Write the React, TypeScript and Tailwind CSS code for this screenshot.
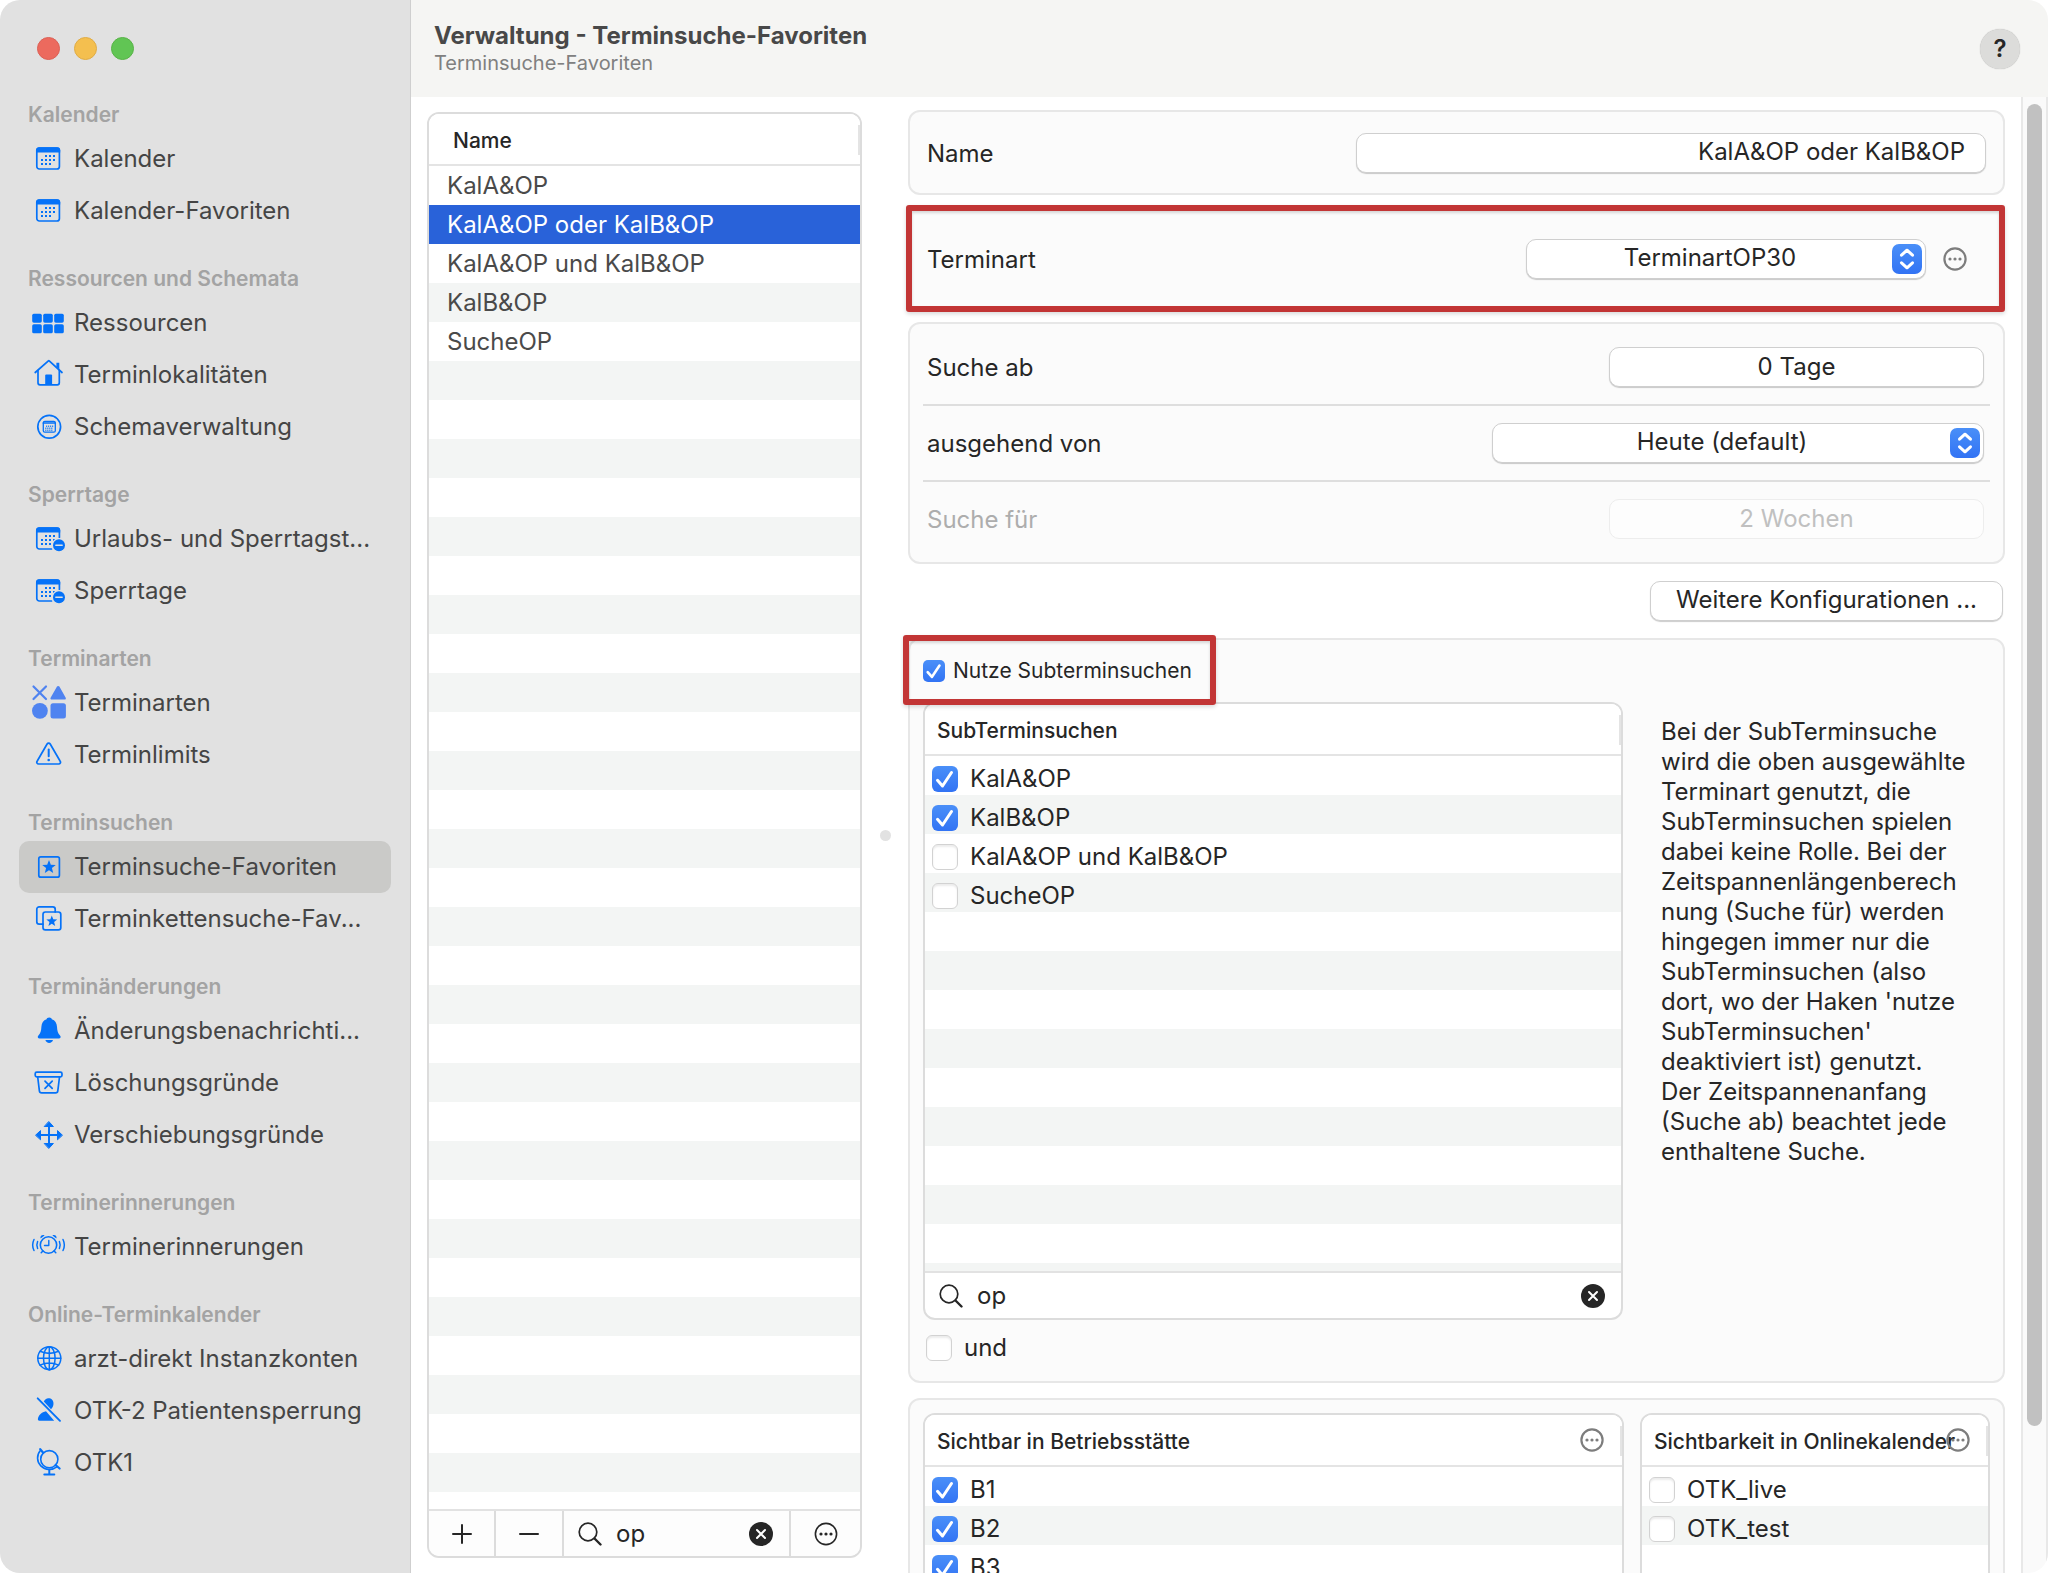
import { useId, useState, type ReactNode } from "react";
import clsx from "clsx";

type IconName =
  | "calendar"
  | "calendar-minus"
  | "grid"
  | "house"
  | "schema"
  | "shapes"
  | "warning"
  | "star"
  | "star-stack"
  | "bell"
  | "bin"
  | "move"
  | "alarm"
  | "globe"
  | "person-slash"
  | "desk-globe";

const SECTIONS: { title: string; items: { label: string; icon: IconName }[] }[] = [
  {
    title: "Kalender",
    items: [
      { label: "Kalender", icon: "calendar" },
      { label: "Kalender-Favoriten", icon: "calendar" },
    ],
  },
  {
    title: "Ressourcen und Schemata",
    items: [
      { label: "Ressourcen", icon: "grid" },
      { label: "Terminlokalitäten", icon: "house" },
      { label: "Schemaverwaltung", icon: "schema" },
    ],
  },
  {
    title: "Sperrtage",
    items: [
      { label: "Urlaubs- und Sperrtagst...", icon: "calendar-minus" },
      { label: "Sperrtage", icon: "calendar-minus" },
    ],
  },
  {
    title: "Terminarten",
    items: [
      { label: "Terminarten", icon: "shapes" },
      { label: "Terminlimits", icon: "warning" },
    ],
  },
  {
    title: "Terminsuchen",
    items: [
      { label: "Terminsuche-Favoriten", icon: "star" },
      { label: "Terminkettensuche-Fav...", icon: "star-stack" },
    ],
  },
  {
    title: "Terminänderungen",
    items: [
      { label: "Änderungsbenachrichti...", icon: "bell" },
      { label: "Löschungsgründe", icon: "bin" },
      { label: "Verschiebungsgründe", icon: "move" },
    ],
  },
  {
    title: "Terminerinnerungen",
    items: [{ label: "Terminerinnerungen", icon: "alarm" }],
  },
  {
    title: "Online-Terminkalender",
    items: [
      { label: "arzt-direkt Instanzkonten", icon: "globe" },
      { label: "OTK-2 Patientensperrung", icon: "person-slash" },
      { label: "OTK1", icon: "desk-globe" },
    ],
  },
];

const FAVORITES = ["KalA&OP", "KalA&OP oder KalB&OP", "KalA&OP und KalB&OP", "KalB&OP", "SucheOP"];

const STAR = "M0-7 1.8-2.3 6.8-2 2.9 1.1 4.2 6 0 3.2-4.2 6-2.9 1.1-6.8-2-1.8-2.3Z";

const CALENDAR_DOTS = [
  [14, 14], [18, 14], [22, 14],
  [10, 18], [14, 18], [18, 18], [22, 18],
  [10, 22], [14, 22], [18, 22],
];

function CalendarDots() {
  return (
    <g fill="currentColor" stroke="none">
      {CALENDAR_DOTS.map(([x, y]) => (
        <rect key={`${x}-${y}`} x={x - 1} y={y - 1} width="2" height="2" />
      ))}
    </g>
  );
}

const ICONS: Record<IconName, ReactNode> = {
  calendar: (
    <>
      <rect x="4.8" y="6" width="22.6" height="21" rx="2.5" />
      <path d="M4 10.5V8.2A3 3 0 0 1 7 5.2h18.2a3 3 0 0 1 3 3v2.3Z" fill="currentColor" stroke="none" />
      <CalendarDots />
    </>
  ),
  "calendar-minus": (
    <>
      <path d="M19.5 27H7.3a2.5 2.5 0 0 1-2.5-2.5V8.5A2.5 2.5 0 0 1 7.3 6h17.6a2.5 2.5 0 0 1 2.5 2.5v7" />
      <path d="M4 10.5V8.2A3 3 0 0 1 7 5.2h18.2a3 3 0 0 1 3 3v2.3Z" fill="currentColor" stroke="none" />
      <CalendarDots />
      <circle cx="27" cy="23.2" r="7.2" fill="#e1e1e1" stroke="none" />
      <circle cx="27" cy="23.2" r="6" fill="currentColor" stroke="none" />
      <path d="M23.8 23.2h6.4" stroke="#e1e1e1" strokeWidth="1.4" />
    </>
  ),
  grid: (
    <g fill="currentColor" stroke="none">
      {[0, 11, 22].map((x) => (
        <g key={x}>
          <rect x={x + 0.2} y="7.7" width="9.6" height="9" rx="1.6" />
          <rect x={x + 0.2} y="18.3" width="9.6" height="9" rx="1.6" />
        </g>
      ))}
    </g>
  ),
  house: (
    <>
      <path d="M3.2 14.5 16.4 2.8a.6.6 0 0 1 .8 0L30 14.5" />
      <path d="M6 12.5v12.3a2 2 0 0 0 2 2h17.3a2 2 0 0 0 2-2V12.5" />
      <path d="M24.4 4.8h2.9v6.7l-2.9-2.6Z" fill="currentColor" stroke="none" />
      <path d="M13.2 26.5v-9a1 1 0 0 1 1-1h4.9a1 1 0 0 1 1 1v9Z" fill="currentColor" stroke="none" />
    </>
  ),
  schema: (
    <>
      <circle cx="17.2" cy="16.8" r="11.4" />
      <rect x="11.3" y="11.4" width="12" height="10.8" rx="1.5" strokeWidth="1.3" />
      <path d="M11.3 13h12" strokeWidth="1.6" />
      <g fill="currentColor" stroke="none">
        {[14, 16, 18, 20].map((x) => (
          <g key={x}>
            <rect x={x} y="15.6" width="1.2" height="1.2" />
            <rect x={x - 0.8} y="17.6" width="1.2" height="1.2" />
            <rect x={x - 0.8} y="19.6" width="1.2" height="1.2" />
          </g>
        ))}
      </g>
    </>
  ),
  shapes: (
    <g className="text-[#4f83f0]">
      <path d="m1.5.5 12.5 12.5M14 .5 1.5 13" strokeWidth="2.2" />
      <path d="M25 .6a1.4 1.4 0 0 1 2.4 0l6.3 11.2a1.2 1.2 0 0 1-1 1.8H19.6a1.2 1.2 0 0 1-1-1.8Z" fill="currentColor" stroke="none" />
      <circle cx="7.9" cy="24.8" r="7.9" fill="currentColor" stroke="none" />
      <rect x="18.5" y="17.2" width="15.4" height="15.2" rx="2.5" fill="currentColor" stroke="none" />
    </g>
  ),
  warning: (
    <>
      <path d="M15.1 6a1.8 1.8 0 0 1 3.1 0l10 17.2a1.8 1.8 0 0 1-1.6 2.8H6.7a1.8 1.8 0 0 1-1.6-2.8Z" />
      <path d="M16.7 11.5v6.8" strokeWidth="2" />
      <circle cx="16.7" cy="22" r="1.3" fill="currentColor" stroke="none" />
    </>
  ),
  star: (
    <>
      <rect x="6.8" y="6.8" width="20.6" height="20.4" rx="2" />
      <path d={STAR} transform="translate(17 17)" fill="currentColor" stroke="none" />
    </>
  ),
  "star-stack": (
    <>
      <path d="M11 22.2H7.2a2.4 2.4 0 0 1-2.4-2.4V7.2a2.4 2.4 0 0 1 2.4-2.4h13.6a2.4 2.4 0 0 1 2.4 2.4V10" />
      <rect x="11" y="10" width="17.8" height="17.8" rx="2.4" />
      <path d={STAR} transform="translate(19.8 19.2) scale(.8)" fill="currentColor" stroke="none" />
    </>
  ),
  bell: (
    <g fill="currentColor" stroke="none">
      <path d="M17.2 3.6c1.6 0 2.4.9 2.6 1.7 3.3 1 5 3.9 5.2 7.5.2 4.2.8 6.4 3 8.8 1.3 1.4.6 3-1.2 3H7.6c-1.8 0-2.5-1.6-1.2-3 2.2-2.4 2.8-4.6 3-8.8.2-3.6 1.9-6.5 5.2-7.5.2-.8 1-1.7 2.6-1.7Z" />
      <path d="M13.4 26h7.6c-.4 1.8-2 2.9-3.8 2.9S13.8 27.8 13.4 26Z" />
    </g>
  ),
  bin: (
    <>
      <rect x="3.2" y="6.2" width="26.8" height="4.6" rx="1.5" />
      <path d="m5.7 11 1.7 13.8a2.2 2.2 0 0 0 2.2 2h14a2.2 2.2 0 0 0 2.2-2L27.5 11" />
      <path d="m13 15.2 7.2 7.2M20.2 15.2 13 22.4" />
    </>
  ),
  move: (
    <>
      <path d="M17 7v20M7 17h20" strokeWidth="2" />
      <g fill="currentColor" strokeWidth="1">
        <path d="m17 3.8 4.4 4.7h-8.8Z" />
        <path d="m17 30.2 4.4-4.7h-8.8Z" />
        <path d="m3.8 17 4.7-4.4v8.8Z" />
        <path d="m30.2 17-4.7-4.4v8.8Z" />
      </g>
    </>
  ),
  alarm: (
    <>
      <circle cx="16.5" cy="15" r="8.2" strokeWidth="1.6" />
      <path d="M16.8 10.5v5h-4.3" strokeWidth="1.4" />
      <path d="m9.2 22.8 1.7-1.9M23.8 22.8l-1.7-1.9" strokeWidth="1.5" />
      <path d="M8.6 8.6c-.9-2.2 1.5-4.4 4-3.2ZM24.400 8.600c.9-2.200-1.500-4.400-4-3.200Z" fill="currentColor" stroke="none" />
      <path d="M5.6 11.5c-1 2.3-1 4.7 0 7M27.4 11.5c1 2.3 1 4.7 0 7M2 9.5c-1.8 3.7-1.8 7.3 0 11M31 9.5c1.8 3.7 1.8 7.3 0 11" strokeWidth="1.5" />
    </>
  ),
  globe: (
    <g strokeWidth="1.5">
      <circle cx="17.3" cy="16.2" r="11.5" />
      <ellipse cx="17.3" cy="16.2" rx="5.8" ry="11.5" />
      <path d="M17.3 4.7v23M5.8 16.2h23M8 9.3c5.6 2.5 13 2.5 18.6 0M8 23.1c5.6-2.5 13-2.5 18.6 0" />
    </g>
  ),
  "person-slash": (
    <>
      <path d="M11.8 7.5c1-2.4 3.2-3.7 5.6-3.2 3 .6 4.6 3.3 4 6.5-.3 1.9-1.2 3.5-2.4 4.4Z" fill="currentColor" stroke="none" />
      <path d="M14 17.2c-4.3.9-7.5 4-8.1 7.6-.2 1.2.4 1.9 1.5 1.9h14.8Z" fill="currentColor" stroke="none" />
      <path d="m5.7 4.3 22.3 22.5" strokeWidth="1.9" />
    </>
  ),
  "desk-globe": (
    <g strokeWidth="1.6">
      <circle cx="17.3" cy="13.2" r="8.6" />
      <path d="M8.2 4.8c-3.6 4-3.6 11 .6 15 4.6 4.4 11.4 4.7 16 1" />
      <path d="m8.2 3.2 3 3.6M23.6 19l4 3.5" strokeWidth="2.2" />
      <path d="M17.3 24v4M12.3 28.6h10" strokeWidth="2" />
    </g>
  ),
};

function SidebarIcon({ name }: { name: IconName }) {
  return (
    <svg
      viewBox="0 0 34 34"
      className="h-[34px] w-[34px] shrink-0 overflow-visible text-[#0572f8]"
      fill="none"
      stroke="currentColor"
      strokeWidth="1.7"
      strokeLinecap="round"
      strokeLinejoin="round"
      aria-hidden="true"
    >
      {ICONS[name]}
    </svg>
  );
}

function EllipsisCircle({ thin }: { thin?: boolean }) {
  return (
    <svg viewBox="0 0 24 24" className="h-6 w-6" fill="none" stroke="currentColor" strokeWidth={thin ? 1.6 : 2.2} aria-hidden="true">
      <circle cx="12" cy="12" r="10.6" />
      <g fill="currentColor" stroke="none">
        <circle cx="7" cy="12" r="1.6" />
        <circle cx="12" cy="12" r="1.6" />
        <circle cx="17" cy="12" r="1.6" />
      </g>
    </svg>
  );
}

function Checkbox({ label, defaultChecked, small }: { label: string; defaultChecked?: boolean; small?: boolean }) {
  return (
    <label className={clsx("flex items-center leading-8", small ? "gap-2 text-[21px]" : "gap-3 text-[24px]")}>
      <span className="grid shrink-0">
        <input
          type="checkbox"
          defaultChecked={defaultChecked}
          className={clsx(
            "peer col-start-1 row-start-1 appearance-none border border-[#d2d2d2] bg-white shadow-[inset_0_2px_2px_rgba(0,0,0,0.08)] checked:border-0 checked:bg-linear-to-b checked:from-[#4a8ff8] checked:to-[#3273f4] checked:shadow-none",
            small ? "h-[22px] w-[22px] rounded-[5px]" : "h-[26px] w-[26px] rounded-md",
          )}
        />
        <svg
          viewBox="0 0 26 26"
          className={clsx(
            "pointer-events-none invisible col-start-1 row-start-1 peer-checked:visible",
            small ? "h-[22px] w-[22px]" : "h-[26px] w-[26px]",
          )}
          fill="none"
          stroke="white"
          strokeWidth="3"
          strokeLinecap="round"
          strokeLinejoin="round"
          aria-hidden="true"
        >
          <path d="m5.5 14.300 5 5.700L19.500 6.500" />
        </svg>
      </span>
      {label}
    </label>
  );
}

function SearchField({ label }: { label: string }) {
  const [query, setQuery] = useState("op");
  return (
    <div className="flex h-full flex-1 items-center pr-4 pl-3.5">
      <svg viewBox="0 0 24 24" className="h-6 w-6 shrink-0" fill="none" stroke="currentColor" strokeLinecap="round" aria-hidden="true">
        <circle cx="10" cy="10" r="8.8" strokeWidth="1.7" />
        <path d="m16.5 16.5 6 6" strokeWidth="2.4" />
      </svg>
      <input
        type="text"
        aria-label={label}
        value={query}
        onChange={(e) => setQuery(e.target.value)}
        className="ml-3.5 h-8 w-0 min-w-0 flex-1 bg-transparent text-[24px] outline-none"
      />
      <button type="button" aria-label="Suche leeren" onClick={() => setQuery("")}>
        <svg viewBox="0 0 24 24" className="h-6 w-6" aria-hidden="true">
          <circle cx="12" cy="12" r="12" fill="#262626" />
          <path d="m8 8 8 8M16 8l-8 8" stroke="white" strokeWidth="2" strokeLinecap="round" />
        </svg>
      </button>
    </div>
  );
}

function PopUp({ id, options, className }: { id: string; options: string[]; className: string }) {
  return (
    <div className={clsx("relative h-10", className)}>
      <select
        id={id}
        className="h-full w-full appearance-none rounded-[10px] border border-[#cfcfcf] bg-white pr-8 pb-0.5 [text-align-last:center] text-[24px] shadow-[0_1px_1px_rgba(0,0,0,0.2)] outline-none"
      >
        {options.map((option) => (
          <option key={option}>{option}</option>
        ))}
      </select>
      <span className="pointer-events-none absolute top-[5px] right-1 grid h-[30px] w-[30px] place-items-center rounded-[7px] bg-linear-to-b from-[#4a8ff8] to-[#3273f4]">
        <svg viewBox="0 0 30 30" className="h-[30px] w-[30px]" fill="none" stroke="white" strokeWidth="3" strokeLinecap="round" strokeLinejoin="round" aria-hidden="true">
          <path d="m9.5 11.2 5.5-5 5.500 5M9.500 18.800l5.500 5 5.500-5" />
        </svg>
      </span>
    </div>
  );
}

const STRIPES =
  "bg-[linear-gradient(to_bottom,#ffffff_39px,#f3f5f4_39px)] bg-[length:100%_78px] bg-[position:0_52px]";

function ListTable({
  title,
  headClass,
  rows,
  action,
}: {
  title: string;
  headClass: string;
  rows: { key: string; cell: ReactNode; className?: string }[];
  action?: ReactNode;
}) {
  return (
    <div className={clsx("min-h-0 flex-1 overflow-hidden", STRIPES)}>
      <table className="w-full border-separate border-spacing-0">
        <thead>
          <tr>
            <th
              scope="col"
              className={clsx(
                "relative h-[52px] border-b-2 border-[#e4e4e4] bg-white pt-1 pr-0 pb-0 text-left text-[21px] leading-8 font-medium whitespace-nowrap",
                headClass,
              )}
            >
              {title}
              {action}
              <span className="absolute top-[11px] right-0 h-[30px] w-0.5 bg-[#e4e4e4]" />
            </th>
          </tr>
        </thead>
        <tbody>
          {rows.map((row) => (
            <tr key={row.key}>
              <td className={clsx("h-[39px] pr-0 pb-0", row.className)}>{row.cell}</td>
            </tr>
          ))}
        </tbody>
      </table>
    </div>
  );
}

const FRAME = "flex flex-col overflow-hidden rounded-xl border-2 border-[#dcdcdc] bg-white";
const GROUP = "rounded-xl border-2 border-[#e7e7e7] bg-[#fbfbfb]";
const FIELD =
  "h-10 rounded-[10px] border border-[#cfcfcf] bg-white pb-0.5 text-[24px] shadow-[0_1px_1px_rgba(0,0,0,0.2)] outline-none";
const MARK =
  "rounded-[3px] border-6 border-[#c23535] shadow-[0_2px_4px_rgba(0,0,0,0.15),inset_0_2px_3px_rgba(0,0,0,0.15)]";

function checkRows(items: [string, boolean][]) {
  return items.map(([label, checked]) => ({
    key: label,
    className: "pt-1.5 pl-[7px]",
    cell: <Checkbox label={label} defaultChecked={checked} />,
  }));
}

function Sidebar() {
  return (
    <aside className="flex w-[411px] shrink-0 flex-col border-r border-[#cfcfcf] bg-[#e1e1e1]">
      <div className="flex h-[97px] items-center gap-3.5 pl-[37px]">
        <button type="button" aria-label="Schließen" className="h-[23px] w-[23px] rounded-full border border-[#dc6055] bg-[#ec6a5e]" />
        <button type="button" aria-label="Minimieren" className="h-[23px] w-[23px] rounded-full border border-[#e0ac45] bg-[#f4bf4f]" />
        <button type="button" aria-label="Maximieren" className="h-[23px] w-[23px] rounded-full border border-[#58b347] bg-[#61c554]" />
      </div>
      <nav>
        {SECTIONS.map((section) => (
          <section key={section.title} className="mb-6">
            <h2 className="h-9 pl-7 text-[21px] leading-9 font-semibold text-[#a3a3a3]">{section.title}</h2>
            <ul className="px-[19px]">
              {section.items.map((item) => {
                const active = item.label === "Terminsuche-Favoriten";
                return (
                  <li key={item.label}>
                    <a
                      href="#"
                      aria-current={active ? "page" : undefined}
                      className={clsx(
                        "flex h-[52px] items-center gap-2 rounded-[10px] pl-[13px] text-[24px] whitespace-nowrap text-[#454545]",
                        active && "bg-[#cacac8]",
                      )}
                    >
                      <SidebarIcon name={item.icon} />
                      {item.label}
                    </a>
                  </li>
                );
              })}
            </ul>
          </section>
        ))}
      </nav>
    </aside>
  );
}

function FavoriteList() {
  const [selected, setSelected] = useState(FAVORITES[1]);
  return (
    <div className={clsx(FRAME, "mt-[15px] mb-[15px] ml-4 w-[435px] shrink-0")}>
      <ListTable
        title="Name"
        headClass="pl-6"
        rows={FAVORITES.map((name) => ({
          key: name,
          className: clsx("px-0 pt-0", name === selected ? "bg-[#2962d9] text-white" : "text-[#4a4a4a]"),
          cell: (
            <button type="button" onClick={() => setSelected(name)} className="block h-[39px] w-full pl-[18px] text-left text-[24px]">
              {name}
            </button>
          ),
        }))}
      />
      <div className="flex h-[47px] items-center border-t-2 border-[#e2e2e2] bg-[#fdfdfd]">
        <button type="button" aria-label="Hinzufügen" className="grid h-full w-[67px] place-items-center border-r-2 border-[#dcdcdc]">
          <svg viewBox="0 0 22 22" className="h-[22px] w-[22px]" stroke="currentColor" strokeWidth="2" strokeLinecap="round" aria-hidden="true">
            <path d="M2 11h18M11 2v18" />
          </svg>
        </button>
        <button type="button" aria-label="Entfernen" className="grid h-full w-[68px] place-items-center border-r-2 border-[#dcdcdc]">
          <svg viewBox="0 0 22 22" className="h-[22px] w-[22px]" stroke="currentColor" strokeWidth="2" strokeLinecap="round" aria-hidden="true">
            <path d="M2 11h18" />
          </svg>
        </button>
        <SearchField label="Favoriten suchen" />
        <button type="button" aria-label="Weitere Aktionen" className="grid h-full w-[71px] place-items-center border-l-2 border-[#dcdcdc]">
          <EllipsisCircle thin />
        </button>
      </div>
    </div>
  );
}

function FieldRow({ id, label, disabled, children }: { id: string; label: string; disabled?: boolean; children: ReactNode }) {
  return (
    <div className="flex items-center justify-between py-[17px] pr-1.5 pl-1">
      <label htmlFor={id} className={clsx("pt-0.5", disabled && "text-[#adadad]")}>
        {label}
      </label>
      {children}
    </div>
  );
}

function HeaderMenu({ label }: { label: string }) {
  return (
    <button type="button" aria-label={label} className="absolute top-[13px] right-[18px] text-[#7d7d7d]">
      <EllipsisCircle />
    </button>
  );
}

function Detail() {
  const id = useId();
  return (
    <div className="min-w-0 flex-1 overflow-hidden pt-[13px] pr-4 pl-2 text-[24px] leading-8">
      <div className={clsx(GROUP, "flex h-[85px] items-center justify-between pr-[17px] pl-[17px]")}>
        <label htmlFor={`${id}-name`} className="pt-0.5">
          Name
        </label>
        <input id={`${id}-name`} type="text" defaultValue="KalA&OP oder KalB&OP" className={clsx(FIELD, "w-[630px] pr-5 text-right")} />
      </div>

      <div className={clsx(MARK, "mt-2.5 -ml-0.5 flex h-[107px] items-center bg-[#fbfbfb] pr-8 pl-[15px]")}>
        <label htmlFor={`${id}-type`} className="flex-1 pt-0.5">
          Terminart
        </label>
        <PopUp id={`${id}-type`} options={["TerminartOP30"]} className="w-[400px]" />
        <button type="button" aria-label="Terminart-Aktionen" className="ml-[17px] text-[#7d7d7d]">
          <EllipsisCircle />
        </button>
      </div>

      <div className={clsx(GROUP, "mt-2.5 divide-y-2 divide-[#dedede] px-[13px] py-1.5")}>
        <FieldRow id={`${id}-from`} label="Suche ab">
          <input id={`${id}-from`} type="text" defaultValue="0 Tage" className={clsx(FIELD, "w-[375px] text-center")} />
        </FieldRow>
        <FieldRow id={`${id}-base`} label="ausgehend von">
          <PopUp id={`${id}-base`} options={["Heute (default)"]} className="w-[492px]" />
        </FieldRow>
        <FieldRow id={`${id}-for`} label="Suche für" disabled>
          <input
            id={`${id}-for`}
            type="text"
            disabled
            defaultValue="2 Wochen"
            className="h-10 w-[375px] rounded-[10px] border border-[#ededed] bg-[#fdfdfd] pb-0.5 text-center text-[24px] text-[#c0c0c0]"
          />
        </FieldRow>
      </div>

      <div className="mt-[17px] flex justify-end pr-0.5">
        <button type="button" className={clsx(FIELD, "w-[353px]")}>
          Weitere Konfigurationen ...
        </button>
      </div>

      <div className={clsx(GROUP, "mt-[17px] px-[13px] pb-[17px]")}>
        <div className="relative flex h-[62px] w-fit items-center">
          <Checkbox label="Nutze Subterminsuchen" defaultChecked small />
          <span className={clsx(MARK, "pointer-events-none absolute -top-[5px] -right-6 -bottom-[3px] -left-5 z-10")} />
        </div>
        <div className="flex">
          <div className={clsx(FRAME, "h-[618px] flex-1")}>
            <ListTable
              title="SubTerminsuchen"
              headClass="pl-3"
              rows={checkRows([
                ["KalA&OP", true],
                ["KalB&OP", true],
                ["KalA&OP und KalB&OP", false],
                ["SucheOP", false],
              ])}
            />
            <div className="h-[47px] border-t-2 border-[#e2e2e2]">
              <SearchField label="SubTerminsuchen suchen" />
            </div>
          </div>
          <p className="mt-[15px] mr-[22px] ml-[38px] w-[307px] leading-[30px] break-words">
            Bei der SubTerminsuche wird die oben ausgewählte Terminart genutzt, die SubTerminsuchen spielen dabei keine
            Rolle. Bei der Zeitspannenlängenberechnung (Suche für) werden hingegen immer nur die SubTerminsuchen (also
            dort, wo der Haken 'nutze SubTerminsuchen' deaktiviert ist) genutzt. Der Zeitspannenanfang (Suche ab)
            beachtet jede enthaltene Suche.
          </p>
        </div>
        <div className="mt-3 flex pl-[3px]">
          <Checkbox label="und" />
        </div>
      </div>

      <div className={clsx(GROUP, "mt-[15px] flex gap-4 p-[13px]")}>
        <div className={clsx(FRAME, "h-[300px] flex-1")}>
          <ListTable
            title="Sichtbar in Betriebsstätte"
            headClass="pl-3"
            action={<HeaderMenu label="Betriebsstätten-Aktionen" />}
            rows={checkRows([
              ["B1", true],
              ["B2", true],
              ["B3", true],
            ])}
          />
        </div>
        <div className={clsx(FRAME, "h-[300px] w-[350px]")}>
          <ListTable
            title="Sichtbarkeit in Onlinekalender"
            headClass="pl-3"
            action={<HeaderMenu label="Onlinekalender-Aktionen" />}
            rows={checkRows([
              ["OTK_live", false],
              ["OTK_test", false],
            ])}
          />
        </div>
      </div>
    </div>
  );
}

export default function App() {
  return (
    <div className="h-screen bg-white font-['Inter','Liberation_Sans',sans-serif] text-[#262626]">
      <div className="flex h-full overflow-hidden rounded-[20px] bg-white">
        <Sidebar />
        <main className="flex min-w-0 flex-1 flex-col">
          <header className="flex h-[97px] shrink-0 items-center justify-between bg-[#f5f5f3] pr-7 pl-[23px]">
            <div>
              <h1 className="text-[24px] leading-7 font-bold text-[#484848]">Verwaltung - Terminsuche-Favoriten</h1>
              <p className="text-[20px] leading-[26px] text-[#808080]">Terminsuche-Favoriten</p>
            </div>
            <button
              type="button"
              aria-label="Hilfe"
              className="h-10 w-10 rounded-full bg-[#dcdcda] text-[24px] font-semibold shadow-[0_0_1px_rgba(0,0,0,0.3)]"
            >
              ?
            </button>
          </header>
          <div className="flex min-h-0 flex-1">
            <FavoriteList />
            <div className="w-[38px] shrink-0 pl-[18px]">
              <div className="mt-[733px] h-[11px] w-[11px] rounded-full bg-[#e2e2e2]" />
            </div>
            <Detail />
            <div className="w-[27px] shrink-0 border-x-2 border-[#e8e8e8] bg-[#fafafa] pt-[7px] pl-1">
              <div className="h-[90%] w-[15px] rounded-full bg-[#c1c1c1]" />
            </div>
          </div>
        </main>
      </div>
    </div>
  );
}
